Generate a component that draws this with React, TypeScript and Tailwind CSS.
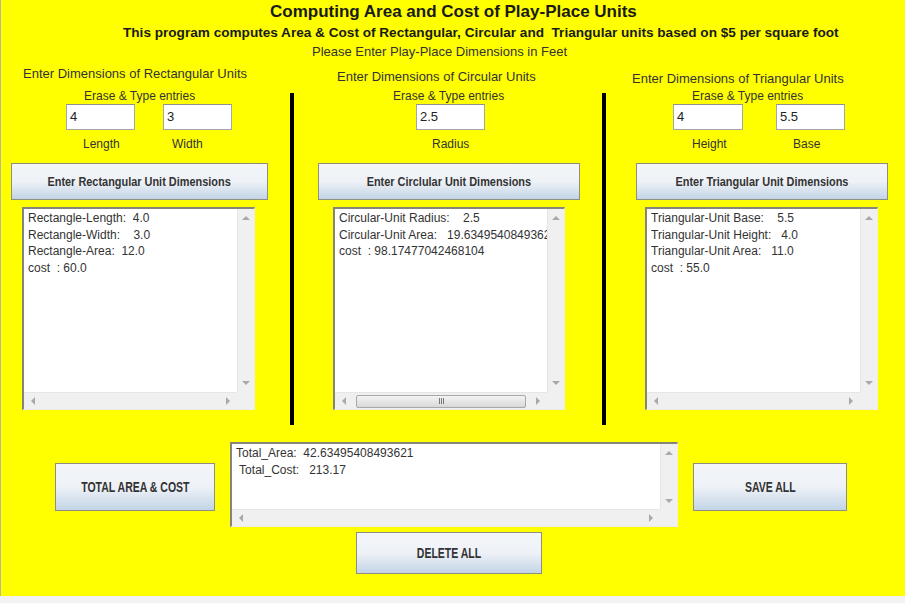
import React from "react";

const font = { fontFamily: '"Liberation Sans", Arial, sans-serif' };

const Btn = ({ label, className, big }: { label: string; className: string; big?: boolean }) => (
  <div
    className={`flex items-center justify-center border border-[#8d9080] bg-gradient-to-b from-[#f3f5f8] via-[#eef2f7] to-[#c3d4e6] font-bold text-[#333] ${
      big ? "text-[15px]" : "text-[13px]"
    } ${className}`}
  >
    <span className={`inline-block whitespace-nowrap ${big ? "scale-x-[0.7]" : "scale-x-[0.84]"}`}>{label}</span>
  </div>
);

const Field = ({ value, className }: { value: string; className: string }) => (
  <div
    className={`h-[26px] w-[69px] shrink-0 border border-[#a4a7a8] border-t-[#8e9194] bg-white pl-[3px] text-[13px] leading-[24px] text-[#222] ${className}`}
  >
    {value}
  </div>
);

const Arrow = ({ dir }: { dir: "up" | "down" | "left" | "right" }) => {
  const pts = {
    up: "0,5 4,1 8,5",
    down: "0,1 4,5 8,1",
    left: "5,0 1,4 5,8",
    right: "1,0 5,4 1,8",
  }[dir];
  const vert = dir === "up" || dir === "down";
  return (
    <svg width={vert ? 8 : 6} height={vert ? 6 : 8} viewBox={vert ? "0 0 8 6" : "0 0 6 8"}>
      <polygon points={pts} fill="#a9a9a9" />
    </svg>
  );
};

const TextBox = ({
  lines,
  className,
  thumb,
  vpad = "py-[6px]",
}: {
  lines: string[];
  className: string;
  thumb?: boolean;
  vpad?: string;
}) => (
  <div
    className={`flex shrink-0 flex-col border-t-2 border-l-2 border-[#85857a] border-r border-b border-r-[#eeeee8] border-b-[#eeeee8] bg-white ${className}`}
  >
    <div className="flex min-h-0 flex-1">
      <div className="min-w-0 flex-1 overflow-hidden pl-[4px] pt-[1px] text-[12px] leading-[16.7px] text-[#333] whitespace-pre">
        {lines.map((l, i) => (
          <div key={i}>{l}</div>
        ))}
      </div>
      <div className={`flex w-[17px] shrink-0 flex-col items-center justify-between border-l border-[#e6e6e6] bg-[#f0f0f0] ${vpad}`}>
        <Arrow dir="up" />
        <Arrow dir="down" />
      </div>
    </div>
    <div className="flex h-[17px] shrink-0">
      <div className="flex flex-1 items-center justify-between border-t border-[#e6e6e6] bg-[#f0f0f0] px-[6px]">
        <Arrow dir="left" />
        {thumb && (
          <div className="flex h-[13px] w-[170px] items-center justify-center rounded-[2px] border border-[#a8a8a8] bg-gradient-to-b from-[#f4f4f4] to-[#d8d8d8]">
            <div className="flex gap-[1px]">
              <div className="h-[6px] w-[1px] bg-[#777]" />
              <div className="h-[6px] w-[1px] bg-[#777]" />
              <div className="h-[6px] w-[1px] bg-[#777]" />
            </div>
          </div>
        )}
        <Arrow dir="right" />
      </div>
      <div className="w-[17px] bg-[#f0f0f0]" />
    </div>
  </div>
);

const Divider = () => <div className="mt-[33px] h-[332px] w-[4px] shrink-0 bg-black" />;

export default function App() {
  return (
    <div className="flex h-[603px] w-[905px] flex-col overflow-hidden bg-white" style={font}>
      <div className="flex flex-1 flex-col border-l border-[#b8b89a] bg-[#ffff00]">
        <div className="pl-[269px] pt-[2px] text-[17px] font-bold leading-[20px] text-[#1a1a1a]">
          Computing Area and Cost of Play-Place Units
        </div>
        <div className="mt-[3px] whitespace-pre pl-[122px] text-[13.6px] font-bold leading-[16px] text-[#1a1a1a]">
          This program computes Area &amp; Cost of Rectangular, Circular and  Triangular units based on $5 per square foot
        </div>
        <div className="mt-[3px] pl-[311px] text-[13px] leading-[16px] text-[#333]">
          Please Enter Play-Place Dimensions in Feet
        </div>

        <div className="flex h-[365px]">
          {/* rectangular */}
          <div className="flex w-[289px] shrink-0 flex-col">
            <div className="h-[28px] pl-[22px] pt-[6px] text-[13px] leading-[16px] text-[#333]">
              Enter Dimensions of Rectangular Units
            </div>
            <div className="pl-[83px] text-[12px] leading-[16px] text-[#333]">Erase &amp; Type entries</div>
            <div className="flex pl-[65px]">
              <Field value="4" className="" />
              <Field value="3" className="ml-[28px]" />
            </div>
            <div className="mt-[6px] flex pl-[65px] text-[12px] leading-[16px] text-[#333]">
              <div className="w-[69px] pl-[17px]">Length</div>
              <div className="ml-[28px] w-[69px] pl-[9px]">Width</div>
            </div>
            <Btn label="Enter Rectangular Unit Dimensions" className="ml-[10px] mt-[11px] h-[37px] w-[257px]" />
            <TextBox
              className="ml-[21px] mt-[7px] h-[203px] w-[233px]"
              lines={["Rectangle-Length:  4.0", "Rectangle-Width:    3.0", "Rectangle-Area:  12.0", "cost  : 60.0"]}
            />
          </div>
          <Divider />
          {/* circular */}
          <div className="flex w-[308px] shrink-0 flex-col">
            <div className="h-[28px] pl-[43px] pt-[9px] text-[13px] leading-[16px] text-[#333]">
              Enter Dimensions of Circular Units
            </div>
            <div className="pl-[99px] text-[12px] leading-[16px] text-[#333]">Erase &amp; Type entries</div>
            <div className="flex pl-[122px]">
              <Field value="2.5" className="" />
            </div>
            <div className="mt-[6px] flex pl-[122px] text-[12px] leading-[16px] text-[#333]">
              <div className="w-[69px] pl-[16px]">Radius</div>
            </div>
            <Btn label="Enter Circlular Unit Dimensions" className="ml-[24px] mt-[11px] h-[37px] w-[262px]" />
            <TextBox
              className="ml-[39px] mt-[7px] h-[203px] w-[232px]"
              thumb
              lines={["Circular-Unit Radius:    2.5", "Circular-Unit Area:   19.63495408493620", "cost  : 98.17477042468104"]}
            />
          </div>
          <Divider />
          {/* triangular */}
          <div className="flex flex-1 flex-col">
            <div className="h-[28px] pl-[26px] pt-[11px] text-[13px] leading-[16px] text-[#333]">
              Enter Dimensions of Triangular Units
            </div>
            <div className="pl-[86px] text-[12px] leading-[16px] text-[#333]">Erase &amp; Type entries</div>
            <div className="flex pl-[67px]">
              <Field value="4" className="w-[70px]" />
              <Field value="5.5" className="ml-[33px]" />
            </div>
            <div className="mt-[6px] flex pl-[67px] text-[12px] leading-[16px] text-[#333]">
              <div className="w-[70px] pl-[19px]">Height</div>
              <div className="ml-[33px] w-[69px] pl-[17px]">Base</div>
            </div>
            <Btn label="Enter Triangular Unit Dimensions" className="ml-[30px] mt-[11px] h-[37px] w-[252px]" />
            <TextBox
              className="ml-[39px] mt-[7px] h-[203px] w-[233px]"
              lines={["Triangular-Unit Base:    5.5", "Triangular-Unit Height:   4.0", "Triangular-Unit Area:   11.0", "cost  : 55.0"]}
            />
          </div>
        </div>

        <div className="mt-[17px] flex items-start pl-[54px]">
          <Btn big label="TOTAL AREA & COST" className="mt-[21px] h-[48px] w-[160px] shrink-0" />
          <TextBox
            className="ml-[15px] h-[85px] w-[448px]"
            vpad="pt-[6px] pb-[5px]"
            lines={["Total_Area:  42.63495408493621", " Total_Cost:   213.17"]}
          />
          <Btn big label="SAVE ALL" className="ml-[15px] mt-[21px] h-[48px] w-[154px] shrink-0" />
        </div>
        <Btn big label="DELETE ALL" className="ml-[355px] mt-[5px] h-[42px] w-[186px]" />
      </div>
      <div className="h-[7px] shrink-0 bg-[#f2f2f2]" />
    </div>
  );
}
